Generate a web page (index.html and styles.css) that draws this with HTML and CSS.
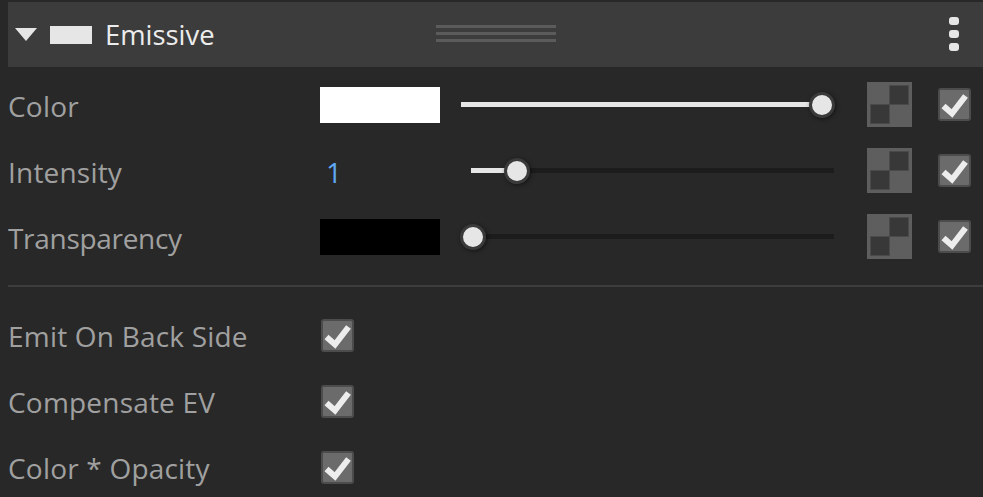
FILE: index.html
```html
<!DOCTYPE html>
<html lang="en">
<head>
    <meta charset="UTF-8">
    <meta name="viewport" content="width=device-width, initial-scale=1.0">
    <title>Emissive</title>
    <link rel="stylesheet" href="styles.css">
</head>
<body>
    <main class="panel">
        <header class="panel-head">
            <span class="arrow"></span>
            <span class="head-swatch"></span>
            <h1 class="head-title">Emissive</h1>
            <span class="grip"><i></i><i></i><i></i></span>
            <span class="dots"><i></i><i></i><i></i></span>
        </header>

        <section class="rows rows-top">
            <div class="row">
                <label class="label">Color</label>
                <span class="swatch swatch-white"></span>
                <div class="slider slider-full">
                    <div class="fill" style="width: 361px"></div>
                    <div class="thumb" style="left: 361px"></div>
                </div>
                <svg class="tex" viewBox="0 0 45 45"><rect width="45" height="45" fill="#5e5e5e"/><rect x="22.5" y="3.5" width="19" height="19" /><rect x="3.5" y="22.5" width="19" height="19" /></svg>
                <span class="check"><svg viewBox="0 0 33 33"><path d="M5.5 18l8.5 7.5L27.5 8" /></svg></span>
            </div>
            <div class="row">
                <label class="label">Intensity</label>
                <span class="value">1</span>
                <div class="slider slider-short">
                    <div class="fill" style="width: 46px"></div>
                    <div class="thumb" style="left: 46px"></div>
                </div>
                <svg class="tex" viewBox="0 0 45 45"><rect width="45" height="45" fill="#5e5e5e"/><rect x="22.5" y="3.5" width="19" height="19" /><rect x="3.5" y="22.5" width="19" height="19" /></svg>
                <span class="check"><svg viewBox="0 0 33 33"><path d="M5.5 18l8.5 7.5L27.5 8" /></svg></span>
            </div>
            <div class="row">
                <label class="label label-tight">Transparency</label>
                <span class="swatch swatch-black"></span>
                <div class="slider slider-full">
                    <div class="fill" style="width: 12px"></div>
                    <div class="thumb" style="left: 12px"></div>
                </div>
                <svg class="tex" viewBox="0 0 45 45"><rect width="45" height="45" fill="#5e5e5e"/><rect x="22.5" y="3.5" width="19" height="19" /><rect x="3.5" y="22.5" width="19" height="19" /></svg>
                <span class="check"><svg viewBox="0 0 33 33"><path d="M5.5 18l8.5 7.5L27.5 8" /></svg></span>
            </div>
        </section>

        <hr class="divider">

        <section class="rows">
            <div class="row">
                <label class="label">Emit On Back Side</label>
                <span class="check"><svg viewBox="0 0 33 33"><path d="M5.5 18l8.5 7.5L27.5 8" /></svg></span>
            </div>
            <div class="row">
                <label class="label">Compensate EV</label>
                <span class="check"><svg viewBox="0 0 33 33"><path d="M5.5 18l8.5 7.5L27.5 8" /></svg></span>
            </div>
            <div class="row">
                <label class="label">Color * Opacity</label>
                <span class="check"><svg viewBox="0 0 33 33"><path d="M5.5 18l8.5 7.5L27.5 8" /></svg></span>
            </div>
        </section>
    </main>
</body>
</html>
```

FILE: styles.css
```css
html, body{
    margin: 0;
    height: 100%;
    overflow: hidden;
}

body{
    background-color: #282828;
    font-family: "Open Sans", "Noto Sans", sans-serif;
}

.panel{
    padding-left: 8px;
}

/* header bar */

.panel-head{
    display: flex;
    align-items: center;
    height: 65px;
    margin-top: 2px;
    background-color: #3c3c3c;
    position: relative;
}

.arrow{
    width: 0;
    height: 0;
    margin-left: 7px;
    border-left: 11px solid transparent;
    border-right: 11px solid transparent;
    border-top: 13px solid #e6e6e6;
}

.head-swatch{
    width: 42px;
    height: 18px;
    margin-left: 13px;
    background-color: #e6e6e6;
}

.head-title{
    margin: 0 0 0 13px;
    font-size: 27.4px;
    font-weight: 400;
    color: #ececec;
}

.grip{
    position: absolute;
    left: 428px;
    top: 23px;
    width: 120px;
}

.grip i{
    display: block;
    height: 3px;
    margin-bottom: 4px;
    background-color: #5b5b5b;
}

.dots{
    position: absolute;
    left: 941px;
    top: 15px;
}

.dots i{
    display: block;
    width: 10px;
    height: 8px;
    margin-bottom: 5px;
    border-radius: 3px;
    background-color: #e6e6e6;
}

/* rows */

.rows-top{
    padding-top: 5px;
}

.row{
    display: flex;
    align-items: center;
    height: 66px;
}

.label{
    width: 313px;
    flex-shrink: 0;
    padding-top: 1px;
    font-size: 28px;
    letter-spacing: 0.2px;
    color: #a0a0a0;
}

.label-tight{
    letter-spacing: -0.3px;
}

.swatch{
    width: 120px;
    height: 36px;
    margin-left: -1px;
    flex-shrink: 0;
}

.swatch-white{
    background-color: #fff;
}

.swatch-black{
    background-color: #000;
}

.value{
    width: 120px;
    margin-left: -1px;
    flex-shrink: 0;
    padding: 1px 0 0 6px;
    box-sizing: border-box;
    font-size: 28px;
    color: #5fa8f5;
}

.slider{
    position: relative;
    height: 5px;
    margin-top: -1px;
    background-color: #1c1c1c;
}

.slider-full{
    width: 373px;
    margin-left: 21px;
}

.slider-short{
    width: 363px;
    margin-left: 31px;
}

.fill{
    height: 100%;
    background-color: #e6e6e6;
}

.thumb{
    position: absolute;
    top: 50%;
    width: 20px;
    height: 20px;
    margin: -13px 0 0 -13px;
    border: 3px solid #3a3a3a;
    border-radius: 50%;
    background-color: #e6e6e6;
    box-shadow: 1px 1px 4px rgba(0, 0, 0, 0.5);
}

.tex{
    width: 45px;
    height: 45px;
    flex-shrink: 0;
    margin-left: 33px;
    margin-top: -1px;
}

.tex rect + rect{
    fill: #383838;
    stroke: #4a4a4a;
}

.check{
    width: 33px;
    height: 33px;
    flex-shrink: 0;
    box-sizing: border-box;
    border: 2px solid #4c4c4c;
    border-radius: 3px;
    background-color: #6b6b6b;
}

.tex + .check{
    margin-left: 26px;
    margin-top: -1px;
}

.check svg{
    display: block;
    width: 33px;
    height: 33px;
    margin: -2px;
}

.check path{
    fill: none;
    stroke: #ededed;
    stroke-width: 6;
}

.divider{
    height: 2px;
    margin: 15px 0;
    border: 0;
    background-color: #3d3d3d;
}
```
